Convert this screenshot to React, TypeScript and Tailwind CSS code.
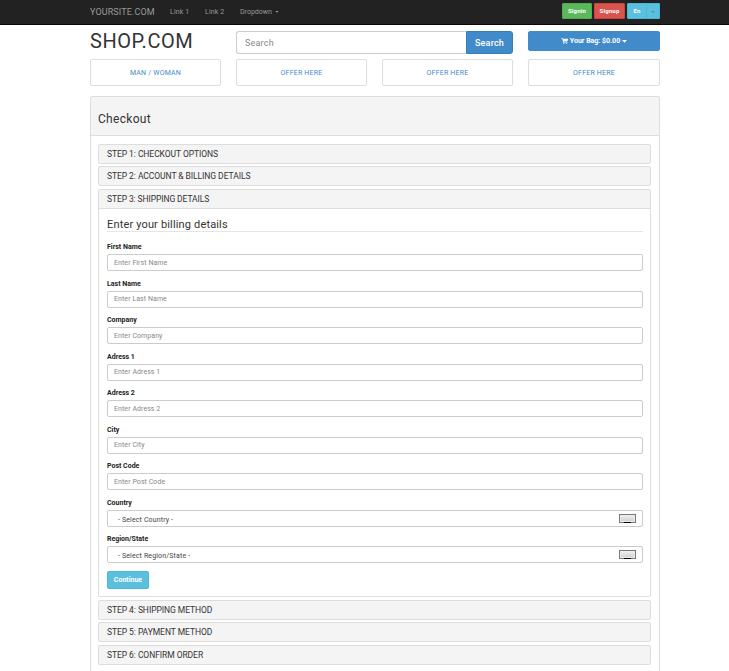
import React from 'react';

const fields = [
  { label: 'First Name', row: 'h-[37px]', line: 'leading-[17px]' },
  { label: 'Last Name', row: 'h-[36px]', line: 'leading-[15px]' },
  { label: 'Company', row: 'h-[37px]', line: 'leading-[17px]' },
  { label: 'Adress 1', row: 'h-[36px]', line: 'leading-[15px]' },
  { label: 'Adress 2', row: 'h-[37px]', line: 'leading-[17px]' },
  { label: 'City', row: 'h-[36px]', line: 'leading-[15px]' },
  { label: 'Post Code', row: 'h-[37px]', line: 'leading-[17px]' },
];

const selects = [
  { label: 'Country', row: 'h-[36px]' },
  { label: 'Region/State', row: 'h-[30px]' },
];

function Label({ children }: { children: React.ReactNode }) {
  return (
    <label className="block h-[13px] text-[7px] leading-[13px] font-bold text-[#222]">{children}</label>
  );
}

function Caret({ className = '' }: { className?: string }) {
  return (
    <svg className={className} width="5" height="3" viewBox="0 0 5 3" fill="currentColor">
      <path d="M0 0h5L2.5 2.8z" />
    </svg>
  );
}

function Step({ title, className = '' }: { title: string; className?: string }) {
  return (
    <div
      className={`h-[20px] rounded-[2px] border border-[#ddd] bg-[#f4f4f4] px-2 text-[8.5px] leading-[19px] tracking-[-0.06px] text-[#333] ${className}`}
    >
      {title}
    </div>
  );
}

function Offer({ children, className = 'w-[131px]' }: { children: React.ReactNode; className?: string }) {
  return (
    <a
      className={`flex h-[27px] items-center justify-center rounded-[2px] border border-[#ddd] pt-[2px] text-[7px] tracking-[0.2px] text-[#428bca] ${className}`}
    >
      {children}
    </a>
  );
}

export default function App() {
  return (
    <div className="h-[671px] w-[729px] overflow-hidden bg-white font-['Roboto','Liberation_Sans',sans-serif] text-[#333]">
      <nav className="h-[25px] border-b border-[#080808] bg-[#222] px-[90px]">
        <div className="flex h-[24px] w-[570px] items-center text-[7px] text-[#999]">
          <span className="w-[80px] pt-px text-[9px] tracking-[0.12px]">YOURSITE.COM</span>
          <span className="w-[35px] tracking-[0.15px]">Link 1</span>
          <span className="w-[35px] tracking-[0.15px]">Link 2</span>
          <span className="flex items-center">
            Dropdown <Caret className="ml-[3px] h-[2px] w-[4px]" />
          </span>
          <div className="mt-[-2px] ml-auto flex gap-[2px] text-[6px] font-bold tracking-[0.2px] text-white">
            <span className="flex h-[16px] w-[30px] items-center justify-center rounded-[1px] border border-[#4cae4c] bg-[#5cb85c] pb-[2px]">
              Signin
            </span>
            <span className="flex h-[16px] w-[31px] items-center justify-center rounded-[1px] border border-[#d43f3a] bg-[#d9534f] pb-[2px]">
              Signup
            </span>
            <span className="flex h-[16px] w-[33px] rounded-[1px] border border-[#46b8da] bg-[#5bc0de]">
              <span className="flex w-[19px] items-center justify-center border-r border-[#46b8da] pb-[2px]">En</span>
              <span className="flex flex-1 items-center justify-center pt-px text-[#428bca]">
                <Caret className="h-[2px] w-[4px]" />
              </span>
            </span>
          </div>
        </div>
      </nav>

      <main className="ml-[90px] w-[570px]">
        <div className="flex h-[34px] pt-[6px]">
          <h1 className="w-[146px] text-[20px] leading-[21px] tracking-[0.55px]">SHOP.COM</h1>
          <div className="flex h-[23px] w-[277px]">
            <div className="w-[230px] rounded-l-[3px] border border-r-0 border-[#ccc] pl-2 text-[9px] leading-[22px] tracking-[0.2px] text-[#888]">
              Search
            </div>
            <button className="w-[47px] rounded-r-[3px] border border-[#357ebd] bg-[#428bca] text-[9px] leading-[22px] font-medium tracking-[0.2px] text-white">
              Search
            </button>
          </div>
          <button className="ml-[15px] flex h-[20px] w-[132px] items-center justify-center rounded-[2px] border border-[#428bca] bg-[#428bca] text-[7px] font-bold text-white">
            <svg className="mr-[2px]" width="7" height="6" viewBox="0 0 7 6" fill="currentColor">
              <path d="M0 0h1.6l.3.8H7L6.4 3.5H2.7l.1.4h3.5v.6H2.2L1.2.6H0z" />
              <circle cx="2.8" cy="5.3" r=".6" />
              <circle cx="5.7" cy="5.3" r=".6" />
            </svg>
            Your Bag: $0.00
            <Caret className="ml-[2px]" />
          </button>
        </div>

        <div className="flex gap-[15px]">
          <Offer>MAN / WOMAN</Offer>
          <Offer>OFFER HERE</Offer>
          <Offer>OFFER HERE</Offer>
          <Offer className="w-[132px]">OFFER HERE</Offer>
        </div>

        <section className="mt-[10px] h-[600px] rounded-t-[2px] border border-[#ddd]">
          <header className="h-[39px] border-b border-[#ddd] bg-[#f4f4f4] px-[7px] text-[12px] leading-[44px] tracking-[0.3px]">
            Checkout
          </header>
          <div className="px-[8px] pt-[8px] pl-[7px]">
            <Step title="STEP 1: CHECKOUT OPTIONS" />
            <Step title="STEP 2: ACCOUNT & BILLING DETAILS" className="mt-[2px]" />
            <div className="mt-[3px] h-[408px] rounded-[2px] border border-[#ddd]">
              <div className="h-[19px] border-b border-[#ddd] bg-[#f4f4f4] px-2 text-[8.5px] leading-[19px] tracking-[-0.1px]">
                STEP 3: SHIPPING DETAILS
              </div>
              <form className="pr-[7px] pl-[8px]">
                <h2 className="mb-[9px] h-[23px] border-b border-[#e5e5e5] pt-[8px] text-[11px] leading-[15px] tracking-[0.16px]">
                  Enter your billing details
                </h2>
                {fields.map((f) => (
                  <div key={f.label} className={f.row}>
                    <Label>{f.label}</Label>
                    <div
                      className={`h-[17px] rounded-[2px] border border-[#ccc] px-[6px] text-[7px] tracking-[0.07px] text-[#888] ${f.line}`}
                    >
                      Enter {f.label}
                    </div>
                  </div>
                ))}
                {selects.map((s) => (
                  <div key={s.label} className={s.row}>
                    <Label>{s.label}</Label>
                    <div className="flex h-[17px] items-start justify-between rounded-[2px] border border-[#ccc] pr-[6px] pl-[10px] text-[7px] leading-[18px] tracking-[0.14px] text-[#444]">
                      <span>- Select {s.label} -</span>
                      <span className="mt-[3px] flex h-[9px] w-[17px] items-end justify-center border border-[#777] bg-linear-to-b from-[#f2f2f2] to-[#ccc] shadow-[inset_0_0_0_1px_#eee]">
                        <span className="mb-[-1px] h-px w-[7px] bg-black" />
                      </span>
                    </div>
                  </div>
                ))}
                <button className="mt-[8px] block h-[18px] w-[42px] rounded-[2px] border border-[#46b8da] bg-[#5bc0de] text-[7px] leading-[16px] font-bold text-white">
                  Continue
                </button>
              </form>
            </div>
            <Step title="STEP 4: SHIPPING METHOD" className="mt-[3px]" />
            <Step title="STEP 5: PAYMENT METHOD" className="mt-[2px]" />
            <Step title="STEP 6: CONFIRM ORDER" className="mt-[3px]" />
          </div>
        </section>
      </main>
    </div>
  );
}
